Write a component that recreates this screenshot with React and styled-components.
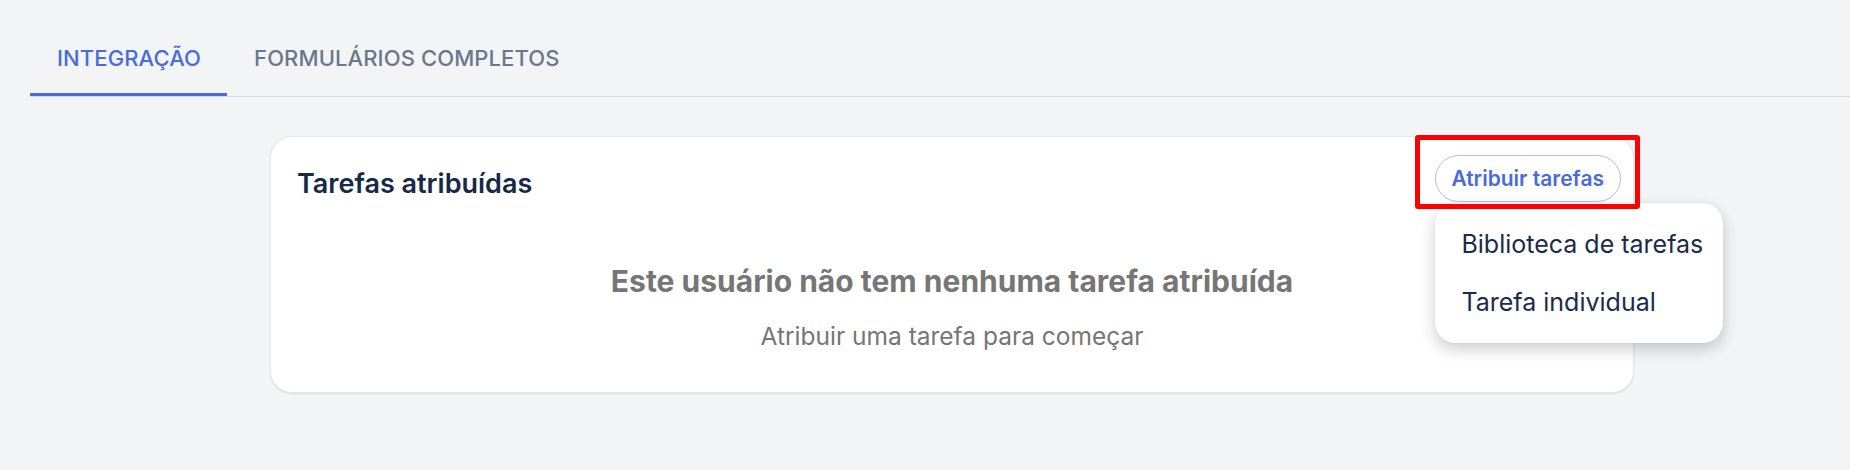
import React from "react";
import styled, { createGlobalStyle } from "styled-components";

const GlobalStyle = createGlobalStyle`
  body {
    margin: 0;
    background: #f3f4f6;
    font-family: Inter, "Noto Sans", sans-serif;
  }
`;

const Page = styled.div`
  width: 1850px;
  min-height: 470px;
  padding-top: 23px;
  box-sizing: border-box;
`;

const TabBar = styled.div`
  display: flex;
  margin-left: 30px;
  border-bottom: 1px solid #d9dbe0;
`;

const Tab = styled.div`
  padding: 24px 26px 24px 27px;
  font-size: 22px;
  line-height: 22px;
  font-weight: 500;
  letter-spacing: 0.1px;
  color: ${(p) => (p.active ? "#4a6ade" : "#6b778d")};
  border-bottom: 3px solid ${(p) => (p.active ? "#4a6ade" : "transparent")};
  white-space: nowrap;
`;

const Card = styled.div`
  margin: 39px 0 0 270px;
  width: 1364px;
  box-sizing: border-box;
  background: #fff;
  border: 1px solid #e4e6ea;
  border-radius: 22px;
  box-shadow: 0 1px 2px rgba(0, 0, 0, 0.1);
  padding: 18px 12px 44px 26px;
`;

const CardHeader = styled.div`
  display: flex;
  justify-content: space-between;
  align-items: flex-start;
`;

const CardTitle = styled.h2`
  margin: 15px 0 0;
  font-size: 27px;
  line-height: 28px;
  font-weight: 600;
  color: #172849;
`;

const MenuAnchor = styled.div`
  position: relative;
`;

const PillButton = styled.button`
  height: 47px;
  padding: 0 16px 0 15px;
  border: 1px solid #afbdf2;
  border-radius: 999px;
  background: #fff;
  font-family: inherit;
  font-size: 21px;
  font-weight: 600;
  color: #4a6ade;
  cursor: pointer;
`;

const Highlight = styled.div`
  position: absolute;
  left: -20px;
  top: -20px;
  right: -19px;
  bottom: -7px;
  border: 5px solid #ff0000;
  border-radius: 3px;
  pointer-events: none;
  z-index: 3;
`;

const Menu = styled.div`
  position: absolute;
  top: calc(100% + 1px);
  left: 0;
  width: 288px;
  box-sizing: border-box;
  padding: 12px 0;
  background: #fff;
  border-radius: 20px;
  box-shadow: 0 6px 16px rgba(0, 0, 0, 0.2), 0 0 1px rgba(0, 0, 0, 0.15);
  z-index: 2;
`;

const MenuItem = styled.div`
  height: 58px;
  display: flex;
  align-items: center;
  padding-left: 26px;
  font-size: 25px;
  color: #1c2a4b;
  white-space: nowrap;
`;

const Empty = styled.div`
  margin-top: 64px;
  margin-left: -14px;
  display: flex;
  flex-direction: column;
  align-items: center;
  color: #767676;
`;

const EmptyTitle = styled.div`
  font-size: 30px;
  line-height: 30px;
  font-weight: 700;
`;

const EmptyText = styled.div`
  margin-top: 28px;
  font-size: 24.5px;
  line-height: 24px;
`;

export default function App() {
  return (
    <Page>
      <GlobalStyle />
      <TabBar>
        <Tab active>INTEGRAÇÃO</Tab>
        <Tab>FORMULÁRIOS COMPLETOS</Tab>
      </TabBar>
      <Card>
        <CardHeader>
          <CardTitle>Tarefas atribuídas</CardTitle>
          <MenuAnchor>
            <PillButton>Atribuir tarefas</PillButton>
            <Highlight />
            <Menu>
              <MenuItem>Biblioteca de tarefas</MenuItem>
              <MenuItem>Tarefa individual</MenuItem>
            </Menu>
          </MenuAnchor>
        </CardHeader>
        <Empty>
          <EmptyTitle>Este usuário não tem nenhuma tarefa atribuída</EmptyTitle>
          <EmptyText>Atribuir uma tarefa para começar</EmptyText>
        </Empty>
      </Card>
    </Page>
  );
}
